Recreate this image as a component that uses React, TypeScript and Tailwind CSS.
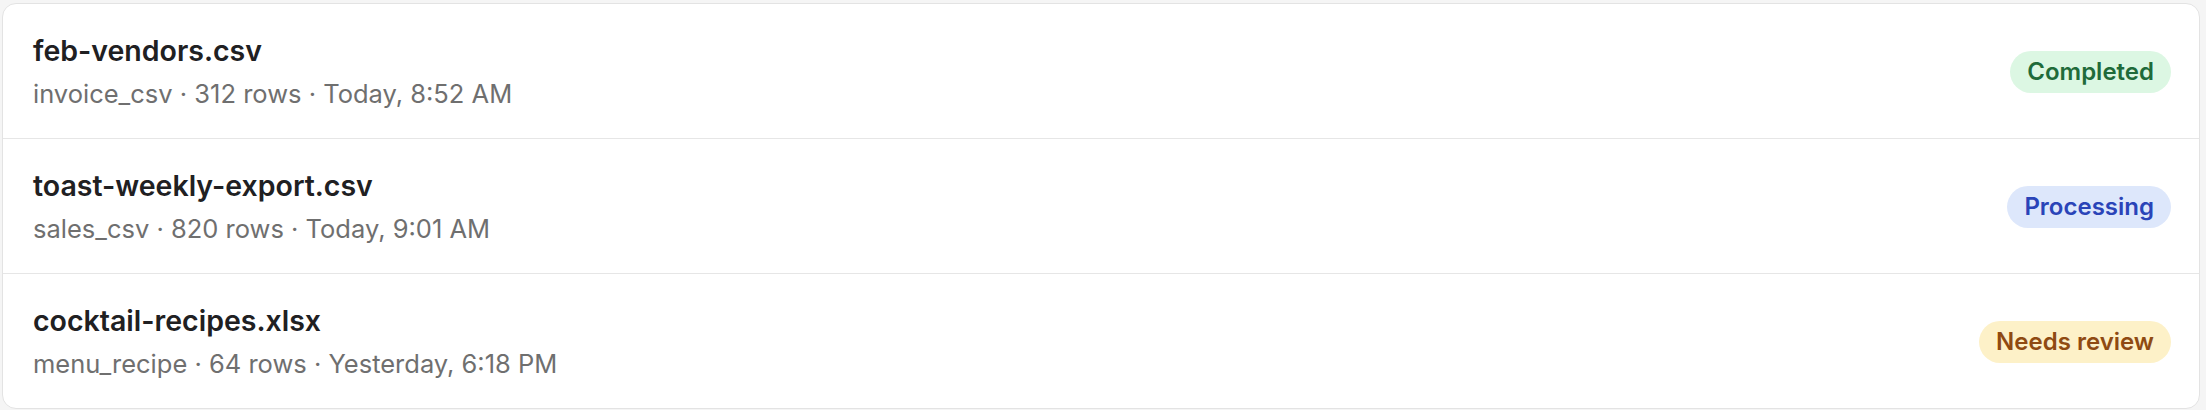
import type { ReactNode } from "react";

type Status = "completed" | "processing" | "review";

type ImportJob = {
  file: string;
  source: string;
  rows: number;
  when: string;
  status: Status;
};

const jobs: ImportJob[] = [
  {
    file: "feb-vendors.csv",
    source: "invoice_csv",
    rows: 312,
    when: "Today, 8:52 AM",
    status: "completed",
  },
  {
    file: "toast-weekly-export.csv",
    source: "sales_csv",
    rows: 820,
    when: "Today, 9:01 AM",
    status: "processing",
  },
  {
    file: "cocktail-recipes.xlsx",
    source: "menu_recipe",
    rows: 64,
    when: "Yesterday, 6:18 PM",
    status: "review",
  },
];

const badgeStyles: Record<Status, string> = {
  completed: "bg-[#dcf7e3] text-[#1f6b3a]",
  processing: "bg-[#dde7fb] text-[#2a44b8]",
  review: "bg-[#fdf1c8] text-[#8f4a12]",
};

const badgeLabels: Record<Status, string> = {
  completed: "Completed",
  processing: "Processing",
  review: "Needs review",
};

function StatusBadge({ status }: { status: Status }) {
  return (
    <span
      className={`inline-flex items-center rounded-full px-[17px] py-[6px] text-[24px] leading-[30px] font-semibold ${badgeStyles[status]}`}
    >
      {badgeLabels[status]}
    </span>
  );
}

function Row({ job, children }: { job: ImportJob; children?: ReactNode }) {
  return (
    <li className="flex items-center justify-between border-b border-[#e6e6e6] pl-[30px] pr-[28px] pt-[30px] pb-[29px] last:border-b-0">
      <div className="flex flex-col gap-[11px]">
        <span className="text-[28.5px] leading-[34px] font-semibold text-[#202022]">
          {job.file}
        </span>
        <span className="text-[25.5px] leading-[30px] text-[#6f6f6f]">
          {job.source} · {job.rows} rows · {job.when}
        </span>
      </div>
      {children}
    </li>
  );
}

export default function App() {
  return (
    <div
      className="min-h-[410px] bg-[#f5f5f5] pt-[3px] pl-[2px] pr-[6px]"
      style={{ fontFamily: "Inter, 'Noto Sans', sans-serif" }}
    >
      <ul className="overflow-hidden rounded-[14px] border border-[#e3e3e3] bg-white">
        {jobs.map((job) => (
          <Row key={job.file} job={job}>
            <StatusBadge status={job.status} />
          </Row>
        ))}
      </ul>
    </div>
  );
}
